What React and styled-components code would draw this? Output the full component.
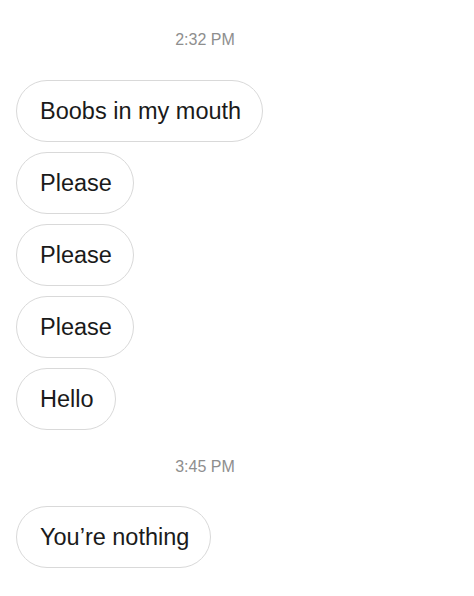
import React from "react";
import styled, { createGlobalStyle } from "styled-components";

const GlobalStyle = createGlobalStyle`
    body {
        margin: 0;
        background: #ffffff;
        font-family: "Liberation Sans", Arial, sans-serif;
    }
`;

const Thread = styled.div`
    display: flex;
    flex-direction: column;
    align-items: flex-start;
    padding: 31px 16px 0 16px;
    width: 474px;
    height: 596px;
    box-sizing: border-box;
`;

const Timestamp = styled.div`
    align-self: stretch;
    text-align: center;
    padding-right: 64px;
    font-size: 16px;
    line-height: 18px;
    color: #8e8e8e;
    margin-bottom: ${(props) => props.after}px;
`;

const Bubble = styled.div`
    display: flex;
    align-items: center;
    height: 62px;
    box-sizing: border-box;
    padding: 0 21px 0 23px;
    border: 1px solid #d9d9d9;
    border-radius: 31px;
    font-size: 23.5px;
    color: #1a1a1a;
    background: #fff;
    margin-bottom: ${(props) => (props.last ? 28 : 10)}px;
`;

const messages = [
    {
        time: "2:32 PM",
        after: 31,
        texts: ["Boobs in my mouth", "Please", "Please", "Please", "Hello"],
    },
    {
        time: "3:45 PM",
        after: 30,
        texts: ["You’re nothing"],
    },
];

export default function App() {
    return (
        <>
            <GlobalStyle />
            <Thread>
                {messages.map((group) => (
                    <React.Fragment key={group.time}>
                        <Timestamp after={group.after}>{group.time}</Timestamp>
                        {group.texts.map((t, i) => (
                            <Bubble key={i} last={i === group.texts.length - 1}>
                                {t}
                            </Bubble>
                        ))}
                    </React.Fragment>
                ))}
            </Thread>
        </>
    );
}
